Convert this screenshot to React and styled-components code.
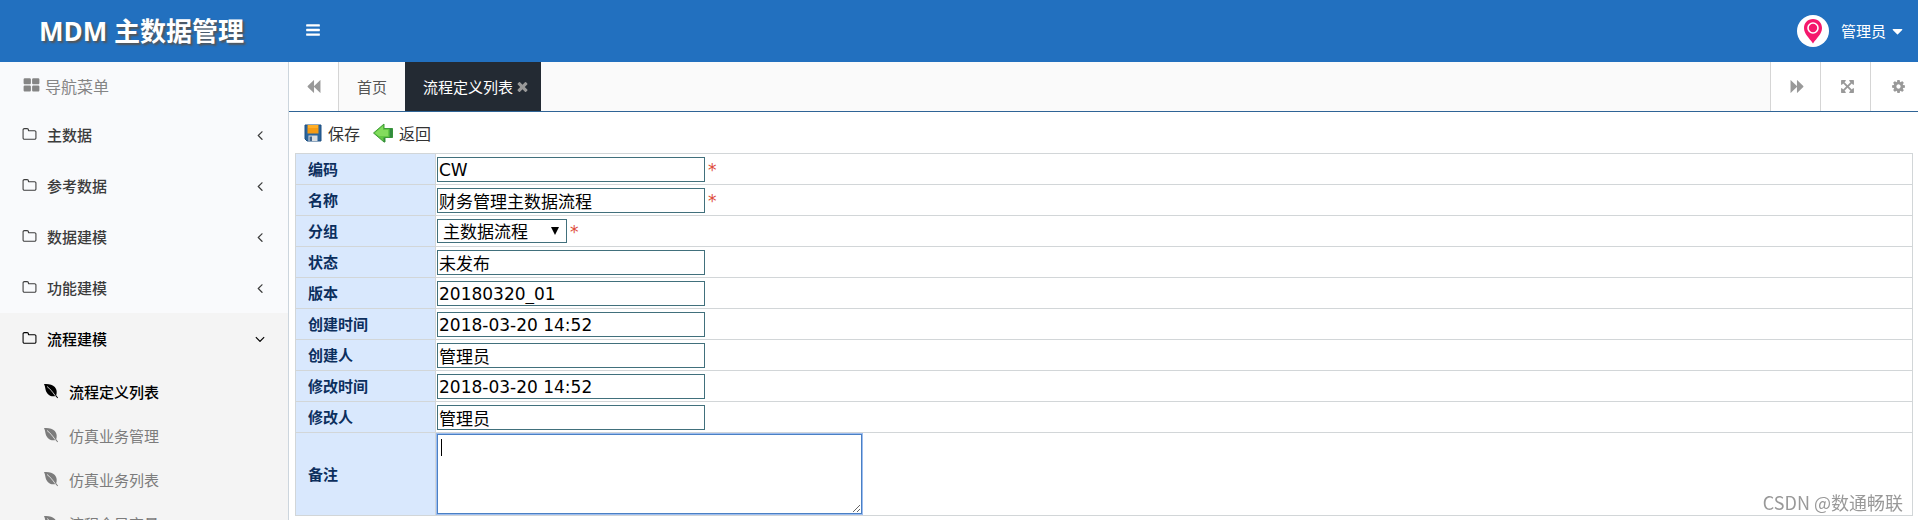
import React from 'react'
import styled, { createGlobalStyle, css } from 'styled-components'

const cjk = `'Noto Sans CJK SC', sans-serif`

const GlobalStyle = createGlobalStyle`
  * {
    box-sizing: border-box;
  }
  body {
    margin: 0;
    overflow: hidden;
    font-family: ${cjk};
    font-size: 15px;
    background: #fff;
  }
`

const paths = {
  bars: 'M1664 1344v128q0 26-19 45t-45 19h-1408q-26 0-45-19t-19-45v-128q0-26 19-45t45-19h1408q26 0 45 19t19 45zm0-512v128q0 26-19 45t-45 19h-1408q-26 0-45-19t-19-45v-128q0-26 19-45t45-19h1408q26 0 45 19t19 45zm0-512v128q0 26-19 45t-45 19h-1408q-26 0-45-19t-19-45v-128q0-26 19-45t45-19h1408q26 0 45 19t19 45z',
  thLarge: 'M832 1024v384q0 52-38 90t-90 38h-512q-52 0-90-38t-38-90v-384q0-52 38-90t90-38h512q52 0 90 38t38 90zm0-768v384q0 52-38 90t-90 38h-512q-52 0-90-38t-38-90v-384q0-52 38-90t90-38h512q52 0 90 38t38 90zm896 768v384q0 52-38 90t-90 38h-512q-52 0-90-38t-38-90v-384q0-52 38-90t90-38h512q52 0 90 38t38 90zm0-768v384q0 52-38 90t-90 38h-512q-52 0-90-38t-38-90v-384q0-52 38-90t90-38h512q52 0 90 38t38 90z',
  folder: 'M1600 1312v-704q0-40-28-68t-68-28h-704q-40 0-68-28t-28-68v-64q0-40-28-68t-68-28h-320q-40 0-68 28t-28 68v960q0 40 28 68t68 28h1216q40 0 68-28t28-68zm128-704v704q0 92-66 158t-158 66h-1216q-92 0-158-66t-66-158v-960q0-92 66-158t158-66h320q92 0 158 66t66 158v32h672q92 0 158 66t66 158z',
  angleLeft: 'M1203 544q0 13-10 23l-393 393 393 393q10 10 10 23t-10 23l-50 50q-10 10-23 10t-23-10l-466-466q-10-10-10-23t10-23l466-466q10-10 23-10t23 10l50 50q10 10 10 23z',
  angleDown: 'M1395 736q0 13-10 23l-466 466q-10 10-23 10t-23-10l-466-466q-10-10-10-23t10-23l50-50q10-10 23-10t23 10l393 393 393-393q10-10 23-10t23 10l50 50q10 10 10 23z',
  backward: 'M1683 141q19-19 32-13t13 32v1472q0 26-13 32t-32-13l-710-710q-9-9-13-19v710q0 26-13 32t-32-13l-710-710q-19-19-19-45t19-45l710-710q19-19 32-13t13 32v710q4-10 13-19z',
  forward: 'M109 1651q-19 19-32 13t-13-32v-1472q0-26 13-32t32 13l710 710q8 8 13 19v-710q0-26 13-32t32 13l710 710q19 19 19 45t-19 45l-710 710q-19 19-32 13t-13-32v-710q-5 10-13 19z',
  arrows: 'M1411 541l-355 355 355 355 144-144q29-31 70-14 39 17 39 59v448q0 26-19 45t-45 19h-448q-42 0-59-40-17-39 14-69l144-144-355-355-355 355 144 144q31 30 14 69-17 40-59 40h-448q-26 0-45-19t-19-45v-448q0-42 40-59 39-17 69 14l144 144 355-355-355-355-144 144q-19 19-45 19-12 0-24-5-40-17-40-59v-448q0-26 19-45t45-19h448q42 0 59 40 17 39-14 69l-144 144 355 355 355-355-144-144q-31-30-14-69 17-40 59-40h448q26 0 45 19t19 45v448q0 42-39 59-13 5-25 5-26 0-45-19z',
  cog: 'M1152 896q0-106-75-181t-181-75-181 75-75 181 75 181 181 75 181-75 75-181zm512-109v222q0 12-8 23t-20 13l-185 28q-19 54-39 91 35 50 107 138 10 12 10 25t-9 23q-27 37-99 108t-94 71q-12 0-26-9l-138-108q-44 23-91 38-16 136-29 186-7 28-36 28h-222q-14 0-24.5-8.5t-11.5-21.5l-28-184q-49-16-90-37l-141 107q-10 9-25 9-14 0-25-11-126-114-165-168-7-10-7-23 0-12 8-23 15-21 51-66.5t54-70.5q-27-50-41-99l-183-27q-13-2-21-12.5t-8-23.5v-222q0-12 8-23t19-13l186-28q14-46 39-92-40-57-107-138-10-12-10-24 0-10 9-23 26-36 98.5-107.5t94.5-71.5q13 0 26 10l138 107q44-23 91-38 16-136 29-186 7-28 36-28h222q14 0 24.5 8.5t11.5 21.5l28 184q49 16 90 37l142-107q9-9 24-9 13 0 25 10 129 119 165 170 7 8 7 22 0 12-8 23-15 21-51 66.5t-54 70.5q26 50 41 98l183 28q13 2 21 12.5t8 23.5z',
  times: 'M1490 1322q0 40-28 68l-136 136q-28 28-68 28t-68-28l-294-294-294 294q-28 28-68 28t-68-28l-136-136q-28-28-28-68t28-68l294-294-294-294q-28-28-28-68t28-68l136-136q28-28 68-28t68 28l294 294 294-294q28-28 68-28t68 28l136 136q28 28 28 68t-28 68l-294 294 294 294q28 28 28 68z',
  caret: 'M1408 704q0 26-19 45l-448 448q-19 19-45 19t-45-19l-448-448q-19-19-19-45t19-45 45-19h896q26 0 45 19t19 45z',
}

const Icon = ({ name, size = 16 }) => (
  <svg width={size} height={size} viewBox="0 0 1792 1792" fill="currentColor" aria-hidden="true">
    <path d={paths[name]} />
  </svg>
)

const Page = styled.div`
  height: 100vh;
  display: flex;
  flex-direction: column;
  overflow: hidden;
`
const Header = styled.header`
  height: 62px;
  flex: none;
  display: flex;
  align-items: center;
  background: #2270bf;
  color: #fff;
`
const Logo = styled.h1`
  width: 288px;
  margin: 0;
  padding-left: 39px;
  font: bold 26px/60px 'Open Sans', ${cjk};
  text-shadow: 2px 2px 2px #555;
  white-space: nowrap;
`
const IconButton = styled.button`
  display: flex;
  align-items: center;
  padding: 0;
  border: 0;
  background: none;
  color: inherit;
  cursor: pointer;
`
const MenuToggle = styled(IconButton)`
  margin-left: 17px;
  padding-bottom: 2px;
`
const User = styled(IconButton)`
  margin-left: auto;
  padding-right: 12px;
  font: 15px/24px ${cjk};
`
const UserName = styled.span`
  margin: 0 3px 0 12px;
`
const Body = styled.div`
  flex: 1;
  min-height: 0;
  display: flex;
`
const Sidebar = styled.nav`
  width: 289px;
  flex: none;
  overflow: hidden;
  border-right: 1px solid #ccd5dd;
  background: #f9fafc;
`
const SidebarTitle = styled.div`
  height: 47px;
  padding-left: 23px;
  display: flex;
  align-items: center;
  gap: 5px;
  font-size: 16px;
  color: #858585;
`
const Group = styled.div`
  background: ${(p) => (p.$open ? '#f4f4f4' : 'transparent')};
  color: ${(p) => (p.$open ? '#000' : '#3c3c3c')};
`
const GroupLink = styled.a`
  height: 51px;
  padding: 0 20px 0 22px;
  display: flex;
  align-items: center;
  gap: 10px;
  font-weight: 500;
  color: inherit;
  text-decoration: none;
  svg:last-child {
    margin-left: auto;
  }
`
const SubLink = styled.a`
  height: 44px;
  padding-left: 43px;
  display: flex;
  align-items: center;
  gap: 10px;
  text-decoration: none;
  color: ${(p) => (p.$active ? '#000' : '#7c7c7c')};
  font-weight: ${(p) => (p.$active ? 500 : 400)};
`
const SubMenu = styled.div`
  padding-top: 5px;
`
const Main = styled.main`
  flex: 1;
  min-width: 0;
`
const TabBar = styled.div`
  height: 50px;
  display: flex;
  border-bottom: 1px solid #2f6496;
  background: #fafafa;
`
const TabTool = styled(IconButton)`
  width: 50px;
  justify-content: center;
  background: #fff;
  color: #999;
  ${(p) =>
    p.$side === 'left'
      ? css`
          border-right: 1px solid #d5d5d5;
        `
      : css`
          padding-left: 4px;
          border-left: 1px solid #d5d5d5;
        `}
`
const TabTools = styled.div`
  margin-left: auto;
  display: flex;
  button:last-child {
    width: 48px;
    padding-left: 8px;
  }
`
const Tab = styled.div`
  padding: 0 ${(p) => (p.$active ? 11 : 18)}px 0 18px;
  display: flex;
  align-items: center;
  gap: 2px;
  background: ${(p) => (p.$active ? '#232a33' : 'transparent')};
  color: ${(p) => (p.$active ? '#fff' : '#555')};
  a {
    color: inherit;
    text-decoration: none;
  }
  button {
    color: #999;
  }
`
const Toolbar = styled.div`
  height: 41px;
  padding-left: 15px;
  display: flex;
  align-items: center;
  gap: 13px;
`
const Action = styled(IconButton)`
  gap: 6px;
  font: 16px/24px ${cjk};
  color: #333;
`
const FormTable = styled.table`
  width: calc(100% - 11px);
  margin-left: 6px;
  border-collapse: collapse;
  th,
  td {
    height: 31px;
    padding: 0;
    border: 1px solid #d2d6d8;
  }
  th {
    width: 140px;
    padding-left: 12px;
    background: #d9e8fd;
    color: #0c2f5e;
    font-size: 15px;
    font-weight: 700;
    line-height: 22px;
    text-align: left;
  }
`
const Cell = styled.div`
  padding-left: 1px;
  display: flex;
  align-items: center;
  gap: 3px;
`
const field = css`
  margin: 0;
  border: 1px solid #41707c;
  border-radius: 0;
  background: #fff;
  color: #000;
  font: 17px/20px 'DejaVu Sans', ${cjk};
`
const TextInput = styled.input`
  ${field}
  width: 268px;
  height: 25px;
  padding: 1px 1px 0;
`
const SelectWrap = styled.div`
  position: relative;
  display: flex;
  svg {
    position: absolute;
    top: 8px;
    right: 8px;
    pointer-events: none;
  }
`
const Select = styled.select`
  ${field}
  width: 130px;
  height: 24px;
  padding: 2px 0 0 5px;
  appearance: none;
`
const NoteWrap = styled.div`
  position: relative;
  height: 82px;
  padding: 1px 0 0 1px;
`
const Note = styled.textarea`
  ${field}
  display: block;
  width: 425px;
  height: 80px;
  padding: 2px;
  outline: 1px solid #9dbdf0;
  border-color: #4a80c4;
`
const Caret = styled.span`
  position: absolute;
  left: 5px;
  top: 6px;
  width: 1px;
  height: 17px;
  background: #000;
`
const Required = styled.span`
  height: 22px;
  color: #dd4b39;
  font: 17px/24px 'DejaVu Sans', sans-serif;
`
const Watermark = styled.div`
  position: fixed;
  right: 15px;
  bottom: 5px;
  font-size: 18px;
  line-height: 26px;
  color: #999;
  text-shadow: 1px 1px 0 #fff;
`

const LeafIcon = () => (
  <svg width="16" height="16" viewBox="0 0 16 16" aria-hidden="true">
    <path
      d="M1 1c4.500-.4 8.500.4 10.800 3 2.200 2.500 2.300 5.600 1.400 8.300l1.900 2.500-.7.500-2-2.300c-3 .7-6-.1-8-2.600C2 7.700 2.600 4 1 1z"
      fill="currentColor"
    />
    <path d="M4 3.500c2.500 1.700 5.500 5.300 8.300 9.300" fill="none" stroke="#f4f4f4" strokeWidth=".8" />
  </svg>
)

const SaveIcon = () => (
  <svg width="18" height="18" viewBox="0 0 18 18" aria-hidden="true">
    <path d="M1 1h16v16H3l-2-2z" fill="#2a659d" stroke="#1d4f80" />
    <path d="M3.500 1h11v8.500h-11z" fill="#f59b13" />
    <path d="M4 1h10v3H4z" fill="#ffae26" />
    <path d="M4.500 11.500h9V17h-9z" fill="#d9dde0" />
    <path d="M5.500 12.500h2.500V17H5.500z" fill="#42668c" />
  </svg>
)

const BackIcon = () => (
  <svg width="20" height="20" viewBox="0 0 20 20" aria-hidden="true">
    <path d="M.5 10L11 1v4.500h8.500v9H12V19h-1z" fill="#62c843" stroke="#3f9b38" strokeLinejoin="round" />
    <path d="M2 10l8-7v4h5v6H6z" fill="#83dc5d" />
    <path d="M16.500 5.500h3v9h-3zM10.500 14.500H12V19h-1.500z" fill="#328b3f" />
  </svg>
)

const Avatar = () => (
  <svg width="32" height="32" viewBox="0 0 32 32" aria-hidden="true">
    <circle cx="16" cy="16" r="16" fill="#fff" />
    <path d="M16 4C10.500 4 7 8 7 13c0 6 5 9.500 9 15.500 4-6 9-9.500 9-15.500 0-5-3.500-9-9-9z" fill="#f5176c" />
    <circle cx="16" cy="13" r="5" fill="#f5176c" stroke="#fff" strokeWidth="1.600" />
  </svg>
)

const groups = ['主数据', '参考数据', '数据建模', '功能建模']
const subItems = ['流程定义列表', '仿真业务管理', '仿真业务列表', '流程全局变量']
const before = [
  { id: 'code', label: '编码', value: 'CW', required: true },
  { id: 'name', label: '名称', value: '财务管理主数据流程', required: true },
]
const after = [
  { id: 'state', label: '状态', value: '未发布' },
  { id: 'version', label: '版本', value: '20180320_01' },
  { id: 'createTime', label: '创建时间', value: '2018-03-20 14:52' },
  { id: 'creator', label: '创建人', value: '管理员' },
  { id: 'updateTime', label: '修改时间', value: '2018-03-20 14:52' },
  { id: 'updater', label: '修改人', value: '管理员' },
]

const TextRow = ({ item }) => (
  <tr>
    <th scope="row"><label htmlFor={item.id}>{item.label}</label></th>
    <td>
      <Cell>
        <TextInput id={item.id} type="text" defaultValue={item.value} />
        {item.required && <Required>*</Required>}
      </Cell>
    </td>
  </tr>
)

export default function App() {
  return (
    <Page>
      <GlobalStyle />
      <Header>
        <Logo>MDM 主数据管理</Logo>
        <MenuToggle aria-label="菜单"><Icon name="bars" /></MenuToggle>
        <User>
          <Avatar />
          <UserName>管理员</UserName>
          <Icon name="caret" size={17} />
        </User>
      </Header>
      <Body>
        <Sidebar>
          <SidebarTitle><Icon name="thLarge" size={17} />导航菜单</SidebarTitle>
          {groups.map((name) => (
            <Group key={name}>
              <GroupLink href="#"><Icon name="folder" size={15} />{name}<Icon name="angleLeft" /></GroupLink>
            </Group>
          ))}
          <Group $open>
            <GroupLink href="#"><Icon name="folder" size={15} />流程建模<Icon name="angleDown" /></GroupLink>
            <SubMenu>
              {subItems.map((name, i) => (
                <SubLink href="#" key={name} $active={i === 0}><LeafIcon />{name}</SubLink>
              ))}
            </SubMenu>
          </Group>
        </Sidebar>
        <Main>
          <TabBar>
            <TabTool $side="left" aria-label="向左"><Icon name="backward" size={15} /></TabTool>
            <Tab><a href="#">首页</a></Tab>
            <Tab $active>
              <a href="#">流程定义列表</a>
              <IconButton aria-label="关闭"><Icon name="times" size={15} /></IconButton>
            </Tab>
            <TabTools>
              <TabTool aria-label="向右"><Icon name="forward" size={15} /></TabTool>
              <TabTool aria-label="全屏"><Icon name="arrows" size={15} /></TabTool>
              <TabTool aria-label="设置"><Icon name="cog" size={15} /></TabTool>
            </TabTools>
          </TabBar>
          <Toolbar>
            <Action><SaveIcon />保存</Action>
            <Action><BackIcon />返回</Action>
          </Toolbar>
          <FormTable>
            <tbody>
              {before.map((item) => <TextRow key={item.id} item={item} />)}
              <tr>
                <th scope="row"><label htmlFor="group">分组</label></th>
                <td>
                  <Cell>
                    <SelectWrap>
                      <Select id="group"><option>主数据流程</option></Select>
                      <svg width="8" height="8" viewBox="0 0 8 8" aria-hidden="true"><path d="M0 0h8L4 8z" /></svg>
                    </SelectWrap>
                    <Required>*</Required>
                  </Cell>
                </td>
              </tr>
              {after.map((item) => <TextRow key={item.id} item={item} />)}
              <tr>
                <th scope="row"><label htmlFor="note">备注</label></th>
                <td>
                  <NoteWrap>
                    <Note id="note" />
                    <Caret />
                  </NoteWrap>
                </td>
              </tr>
            </tbody>
          </FormTable>
        </Main>
      </Body>
      <Watermark>CSDN @数通畅联</Watermark>
    </Page>
  )
}
